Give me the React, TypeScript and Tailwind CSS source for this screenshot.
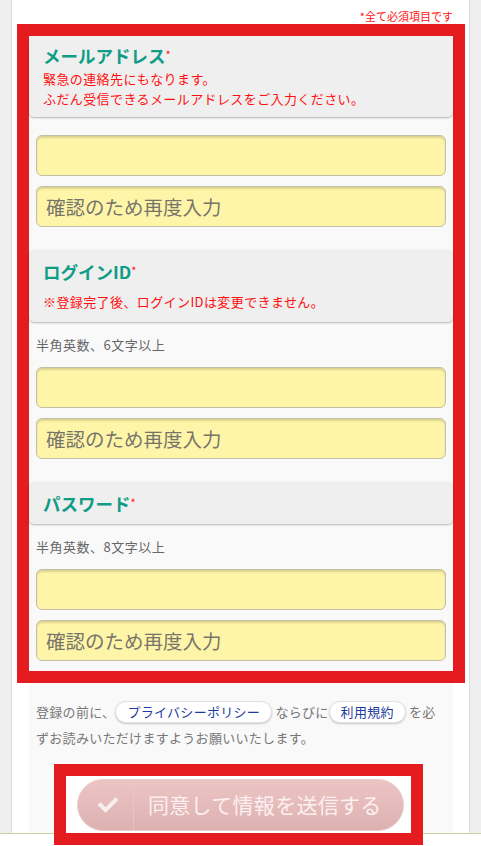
import { FaCheck } from "react-icons/fa";
import type { ReactNode } from "react";

const Header = ({ title, pad, children }: { title: string; pad: string; children?: ReactNode }) => {
    return (
        <div className={`rounded-[5px] bg-[#efefef] pl-[14px] shadow-[0_1px_2px_rgba(0,0,0,0.28)] ${pad}`}>
            <h2 className="flex h-[27px] items-center text-[17.5px] font-bold leading-none text-[#0f9d86]">
                {title}
                <span className="mb-[3px] text-[11px] font-normal leading-none text-[#ff1010]">*</span>
            </h2>
            {children}
        </div>
    );
};

const Inputs = ({ className }: { className: string }) => {
    return (
        <div className={`flex flex-col gap-[10px] px-[7px] ${className}`}>
            <input
                type="text"
                className="block h-[41px] w-full rounded-[6px] border border-[#c2bfa6] bg-[#fff5a8] px-[9px] text-[19.5px] shadow-[inset_0_2px_2px_rgba(0,0,0,0.14)] outline-none"
            />
            <input
                type="text"
                placeholder="確認のため再度入力"
                className="block h-[41px] w-full rounded-[6px] border border-[#c2bfa6] bg-[#fff5a8] px-[9px] text-[19.5px] shadow-[inset_0_2px_2px_rgba(0,0,0,0.14)] outline-none placeholder:text-[#77756a]"
            />
        </div>
    );
};

const Pill = ({ label }: { label: string }) => (
    <span className="inline-block rounded-full border border-[#e2e2e2] bg-white px-[11px] leading-[20px] text-[#1d3b9e] shadow-[0_1px_2px_rgba(0,0,0,0.2)]">
        {label}
    </span>
);

export default function App() {
    return (
        <div className="min-h-[846px] bg-[#efefef] font-['Noto_Sans_CJK_JP',sans-serif]">
            <div className="ml-[11px] w-[459px] border-x border-[#dcdcdc] bg-white pl-[5px] pr-[4px]">
                <p className="pr-[12px] pt-[8px] text-right text-[11px] leading-[16px] text-[#ff1010]">*全て必須項目です</p>

                {/* form block */}
                <div className="border-[12px] border-[#e51c1f] bg-[#f9f9f9] pb-[10px]">
                    <Header title="メールアドレス" pad="pt-[6px] pb-[8px]">
                        <p className="text-[13px] leading-[20px] tracking-[0.4px] text-[#ff1010]">
                            緊急の連絡先にもなります。
                            <br />
                            ふだん受信できるメールアドレスをご入力ください。
                        </p>
                    </Header>
                    <Inputs className="mt-[18px] mb-[23px]" />

                    <Header title="ログインID" pad="pt-[8px] pb-[10px]">
                        <p className="mt-[7px] text-[13px] leading-[20px] tracking-[0.4px] text-[#ff1010]">※登録完了後、ログインIDは変更できません。</p>
                    </Header>
                    <p className="mt-[13px] px-[7px] text-[13px] leading-[20px] tracking-[0.5px] text-[#666]">半角英数、6文字以上</p>
                    <Inputs className="mt-[12px] mb-[23px]" />

                    <Header title="パスワード" pad="pt-[8px] pb-[7px]" />
                    <p className="mt-[13px] px-[7px] text-[13px] leading-[20px] tracking-[0.5px] text-[#666]">半角英数、8文字以上</p>
                    <Inputs className="mt-[12px]" />
                </div>

                {/* agreement */}
                <div className="mx-[12px] h-[150px] bg-[#f9f9f9] px-[7px] pt-[16px]">
                    <p className="text-[13px] leading-[26px] tracking-[0.3px] text-[#777]">
                        登録の前に、<Pill label="プライバシーポリシー" /> ならびに<Pill label="利用規約" /> を必
                        <br />
                        ずお読みいただけますようお願いいたします。
                    </p>
                    <div className="relative z-10 ml-[18px] mt-[13px] h-[81px] w-[369px] border-[12px] border-[#e51c1f] bg-white pl-[11px] pt-[3px]">
                        <button className="flex h-[52px] w-[327px] items-center rounded-full border border-[#ebcaca] bg-linear-to-b from-[#edc4c4] to-[#dcb1b1] text-white">
                            <span className="flex w-[55px] justify-center pl-[4px]">
                                <FaCheck className="h-[20px] w-[22px] text-[#f8eeee]" />
                            </span>
                            <span className="h-full w-px bg-[#e9c6c6]" />
                            <span className="pl-[14px] text-[21px] tracking-[0.3px] text-[#fcf0f0]">同意して情報を送信する</span>
                        </button>
                    </div>
                </div>
            </div>
            <div className="h-[13px] border-t border-[#c5d3a3] bg-white" />
        </div>
    );
}
